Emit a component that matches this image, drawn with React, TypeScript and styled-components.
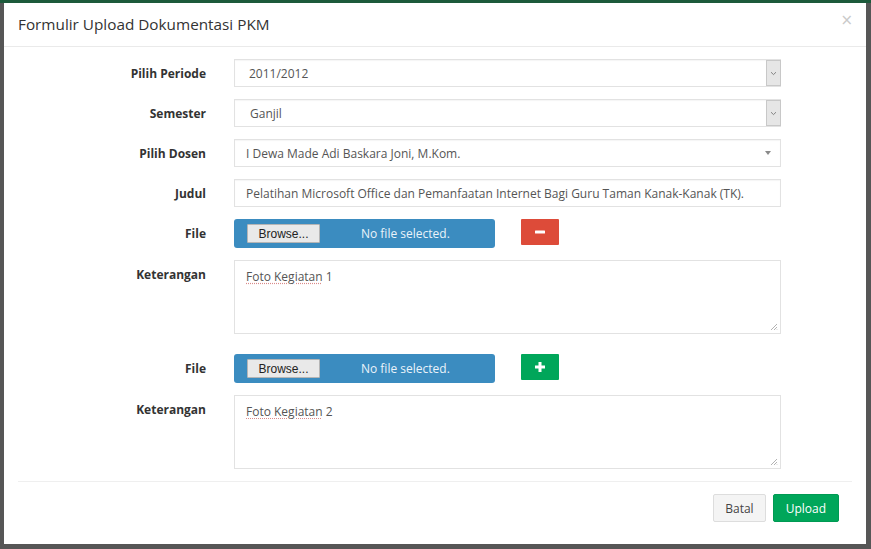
import React from "react";
import styled, { createGlobalStyle } from "styled-components";

const Global = createGlobalStyle`
  html, body { margin: 0; padding: 0; }
  body {
    background: #565656;
    font-family: "Open Sans", "Liberation Sans", Arial, sans-serif;
    width: 871px;
    height: 549px;
    overflow: hidden;
  }
`;

const Backdrop = styled.div`
  width: 871px;
  height: 549px;
  box-sizing: border-box;
  border-top: 3px solid #1c5a3b;
  padding: 0 5px 5px 4px;
  display: flex;
`;

const Modal = styled.div`
  width: 862px;
  height: 541px;
  background: #fff;
  display: flex;
  flex-direction: column;
`;

const Header = styled.div`
  height: 44px;
  box-sizing: border-box;
  border-bottom: 1px solid #eaeaea;
  display: flex;
  align-items: center;
  justify-content: space-between;
  padding: 0 13px 2px 14px;
`;

const Title = styled.h4`
  margin: 0;
  font-size: 15.3px;
  font-weight: 400;
  color: #333;
`;

const Close = styled.span`
  color: #cacaca;
  font-size: 15px;
  line-height: 1;
  margin-top: -6px;
  font-family: "DejaVu Sans", sans-serif;
`;

const Body = styled.div`
  padding: 12px 0 0 0;
  display: flex;
  flex-direction: column;
  gap: 12px;
`;

const Row = styled.div<{ $gapTop?: number }>`
  display: grid;
  grid-template-columns: 202px 547px;
  column-gap: 28px;
  margin-top: ${(p) => p.$gapTop ?? 0}px;
`;

const Label = styled.label`
  text-align: right;
  font-size: 12px;
  font-weight: 700;
  color: #333;
  padding-top: 7px;
  line-height: 16px;
`;

const Field = styled.div<{ $select?: boolean }>`
  height: 28px;
  box-sizing: border-box;
  border: 1px solid #e2e2e2;
  box-shadow: inset 0 1px 1px rgba(0, 0, 0, 0.04);
  background: #fff;
  display: flex;
  align-items: center;
  font-size: 12px;
  color: #555;
  padding-left: ${(p) => (p.$select ? 0 : 11)}px;
`;

const FieldText = styled.span<{ $indent?: number }>`
  flex: 1;
  padding-left: ${(p) => p.$indent ?? 0}px;
  white-space: nowrap;
  overflow: hidden;
`;

const NativeArrow = styled.span`
  width: 15px;
  height: 26px;
  box-sizing: border-box;
  margin-right: -1px;
  background: #e6e6e6;
  border: 1px solid #c8c8c8;
  display: flex;
  align-items: center;
  justify-content: center;
`;

const Caret = styled.span`
  width: 0;
  height: 0;
  border-left: 3.5px solid transparent;
  border-right: 3.5px solid transparent;
  border-top: 4px solid #8a8a8a;
  margin-right: 9px;
`;

const FileLine = styled.div`
  display: flex;
  align-items: flex-start;
  gap: 26px;
`;

const FileBox = styled.div`
  width: 261px;
  height: 29px;
  box-sizing: border-box;
  background: #3b8cc0;
  border-radius: 3px;
  display: flex;
  align-items: center;
  padding-left: 13px;
`;

const Browse = styled.span`
  width: 73px;
  height: 19px;
  box-sizing: border-box;
  background: #e9e9e9;
  border: 1px solid #b5b5b5;
  border-radius: 1px;
  font-size: 12px;
  color: #222;
  display: flex;
  align-items: center;
  justify-content: center;
  font-family: "Liberation Sans", Arial, sans-serif;
`;

const NoFile = styled.span`
  margin-left: 41px;
  font-size: 12px;
  color: #eaf3fa;
`;

const IconButton = styled.span<{ $bg: string }>`
  width: 38px;
  height: 26px;
  background: ${(p) => p.$bg};
  display: flex;
  align-items: center;
  justify-content: center;
  border-radius: 1px;
`;

const TextBox = styled.div`
  height: 74px;
  box-sizing: border-box;
  border: 1px solid #e2e2e2;
  position: relative;
  padding: 7px 11px;
  font-size: 12px;
  color: #555;
`;

const Misspelled = styled.span`
  text-decoration: underline dotted #d98b8b;
  text-underline-offset: 2px;
`;

const Grip = styled.svg`
  position: absolute;
  right: 2px;
  bottom: 2px;
`;

const Footer = styled.div`
  margin: 12px 14px 0;
  border-top: 1px solid #efefef;
  display: flex;
  justify-content: flex-end;
  gap: 7px;
  padding: 12px 13px 0 0;
`;

const Btn = styled.button<{ $primary?: boolean }>`
  height: 28px;
  padding: 0 ${(p) => (p.$primary ? 12 : 11)}px;
  border-radius: 2px;
  border: 1px solid ${(p) => (p.$primary ? "#009a53" : "#ddd")};
  background: ${(p) => (p.$primary ? "#00a65a" : "#f4f4f4")};
  color: ${(p) => (p.$primary ? "#fff" : "#444")};
  font-family: "Open Sans", "Liberation Sans", Arial, sans-serif;
  font-size: 12px;
  cursor: pointer;
`;

const Chevron = () => (
  <svg width="7" height="5" viewBox="0 0 7 5">
    <path d="M1 1.2 L3.5 3.6 L6 1.2" fill="none" stroke="#777" strokeWidth="0.9" />
  </svg>
);

const ResizeGrip = () => (
  <Grip width="8" height="8" viewBox="0 0 8 8">
    <path d="M7 1 L1 7 M7 4 L4 7 M7 6.5 L6.5 7" stroke="#aaa" strokeWidth="0.9" />
  </Grip>
);

const Minus = () => (
  <svg width="10" height="10" viewBox="0 0 10 10">
    <rect x="0" y="3.5" width="10" height="3" rx="0.5" fill="#fff" />
  </svg>
);

const Plus = () => (
  <svg width="10" height="10" viewBox="0 0 10 10">
    <rect x="0" y="3.5" width="10" height="3" fill="#fff" />
    <rect x="3.5" y="0" width="3" height="10" fill="#fff" />
  </svg>
);

const FileGroup = ({ n, first }: { n: number; first: boolean }) => (
  <>
    <Row $gapTop={first ? 0 : 8}>
      <Label>File</Label>
      <FileLine>
        <FileBox>
          <Browse>Browse...</Browse>
          <NoFile>No file selected.</NoFile>
        </FileBox>
        <IconButton $bg={first ? "#dd4b39" : "#00a65a"}>
          {first ? <Minus /> : <Plus />}
        </IconButton>
      </FileLine>
    </Row>
    <Row>
      <Label>Keterangan</Label>
      <TextBox>
        <Misspelled>Foto Kegiatan</Misspelled> {n}
        <ResizeGrip />
      </TextBox>
    </Row>
  </>
);

export default function App() {
  return (
    <>
      <Global />
      <Backdrop>
        <Modal>
          <Header>
            <Title>Formulir Upload Dokumentasi PKM</Title>
            <Close>×</Close>
          </Header>
          <Body>
            <Row>
              <Label>Pilih Periode</Label>
              <Field $select>
                <FieldText $indent={14}>2011/2012</FieldText>
                <NativeArrow>
                  <Chevron />
                </NativeArrow>
              </Field>
            </Row>
            <Row>
              <Label>Semester</Label>
              <Field $select>
                <FieldText $indent={15}>Ganjil</FieldText>
                <NativeArrow>
                  <Chevron />
                </NativeArrow>
              </Field>
            </Row>
            <Row>
              <Label>Pilih Dosen</Label>
              <Field $select>
                <FieldText $indent={11}>I Dewa Made Adi Baskara Joni, M.Kom.</FieldText>
                <Caret />
              </Field>
            </Row>
            <Row>
              <Label>Judul</Label>
              <Field>
                <FieldText>
                  Pelatihan Microsoft Office dan Pemanfaatan Internet Bagi Guru Taman Kanak-Kanak (TK).
                </FieldText>
              </Field>
            </Row>
            <FileGroup n={1} first />
            <FileGroup n={2} first={false} />
          </Body>
          <Footer>
            <Btn>Batal</Btn>
            <Btn $primary>Upload</Btn>
          </Footer>
        </Modal>
      </Backdrop>
    </>
  );
}
